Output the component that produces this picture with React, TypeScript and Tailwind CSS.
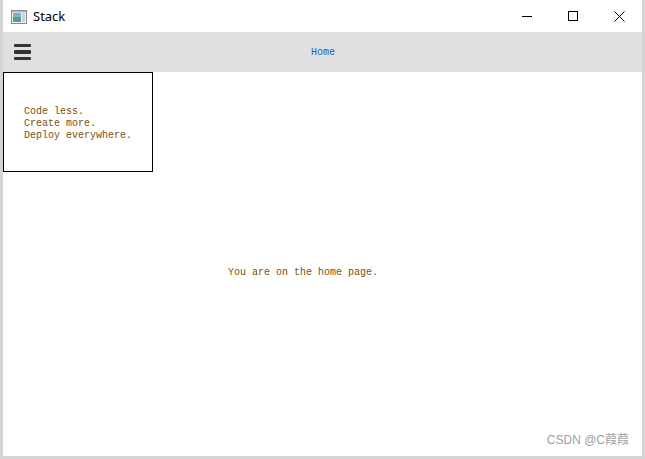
import React from 'react';

const mono = { fontFamily: '"Liberation Mono", "DejaVu Sans Mono", monospace' };

const AppIcon: React.FC = () => (
    <svg width="16" height="14" viewBox="0 0 16 14">
        <rect x="0.5" y="0.5" width="15" height="13" fill="#f4f4f4" stroke="#8a8a8a" />
        <rect x="2" y="3" width="8" height="9" fill="#5a9a9a" />
        <rect x="2" y="3" width="8" height="4" fill="#7fb0c8" />
        <rect x="11" y="3" width="3" height="9" fill="#c8d4dc" />
        <rect x="1" y="1" width="14" height="1.5" fill="#b0b8c0" />
    </svg>
);

const WindowControls: React.FC = () => (
    <div className="flex items-center h-full">
        <div className="w-[46px] h-full flex items-center justify-center">
            <svg width="10" height="10" viewBox="0 0 10 10"><path d="M0 5.5h10" stroke="#000" strokeWidth="1" /></svg>
        </div>
        <div className="w-[46px] h-full flex items-center justify-center">
            <svg width="10" height="10" viewBox="0 0 10 10"><rect x="0.5" y="0.5" width="9" height="9" fill="none" stroke="#000" strokeWidth="1" /></svg>
        </div>
        <div className="w-[46px] h-full flex items-center justify-center">
            <svg width="11" height="11" viewBox="0 0 11 11"><path d="M0.5 0.5l10 10M10.5 0.5l-10 10" stroke="#000" strokeWidth="1" /></svg>
        </div>
    </div>
);

const App: React.FC = () => {
    return (
        <div className="w-[645px] h-[459px] bg-[#d4d4d4] flex px-[3px] pb-[3px] overflow-hidden">
            <div className="flex-1 flex flex-col bg-white">
                {/* title bar */}
                <div className="h-[32px] flex items-center justify-between bg-white">
                    <div className="flex items-center pl-[8px] pt-[2px] gap-[6px]">
                        <AppIcon />
                        <span className="text-[13px] text-black" style={{ fontFamily: '"Noto Sans", "Liberation Sans", sans-serif' }}>Stack</span>
                    </div>
                    <WindowControls />
                </div>

                {/* toolbar */}
                <div className="h-[40px] bg-[#e0e0e0] flex items-center relative">
                    <div className="ml-[11px] flex flex-col gap-[3px]">
                        <div className="w-[17px] h-[3.5px] bg-[#333] rounded-[1px]" />
                        <div className="w-[17px] h-[3.5px] bg-[#333] rounded-[1px]" />
                        <div className="w-[17px] h-[3.5px] bg-[#333] rounded-[1px]" />
                    </div>
                    <span className="absolute left-[308px] top-[15px] text-[10px] leading-[12px] text-[#1f5fb0]" style={mono}>Home</span>
                </div>

                {/* page */}
                <div className="flex-1 relative">
                    <div className="pt-[195px] pl-[225px] text-[10px] leading-[12px] text-[#7c4e12]" style={mono}>
                        You are on the home page.
                    </div>

                    <div className="absolute left-0 top-0 w-[150px] h-[100px] border border-black bg-white pl-[20px] pt-[33px] text-[10px] leading-[12px] text-[#7c4e12]" style={mono}>
                        <div>Code less.</div>
                        <div>Create more.</div>
                        <div>Deploy everywhere.</div>
                    </div>

                    <span
                        className="absolute right-[13px] bottom-[7px] text-[12px] text-[#a0a0a0]"
                        style={{ fontFamily: '"Liberation Sans", "Noto Sans CJK SC", sans-serif' }}
                    >
                        CSDN @C葭葭
                    </span>
                </div>
            </div>
        </div>
    );
};

export default App;
